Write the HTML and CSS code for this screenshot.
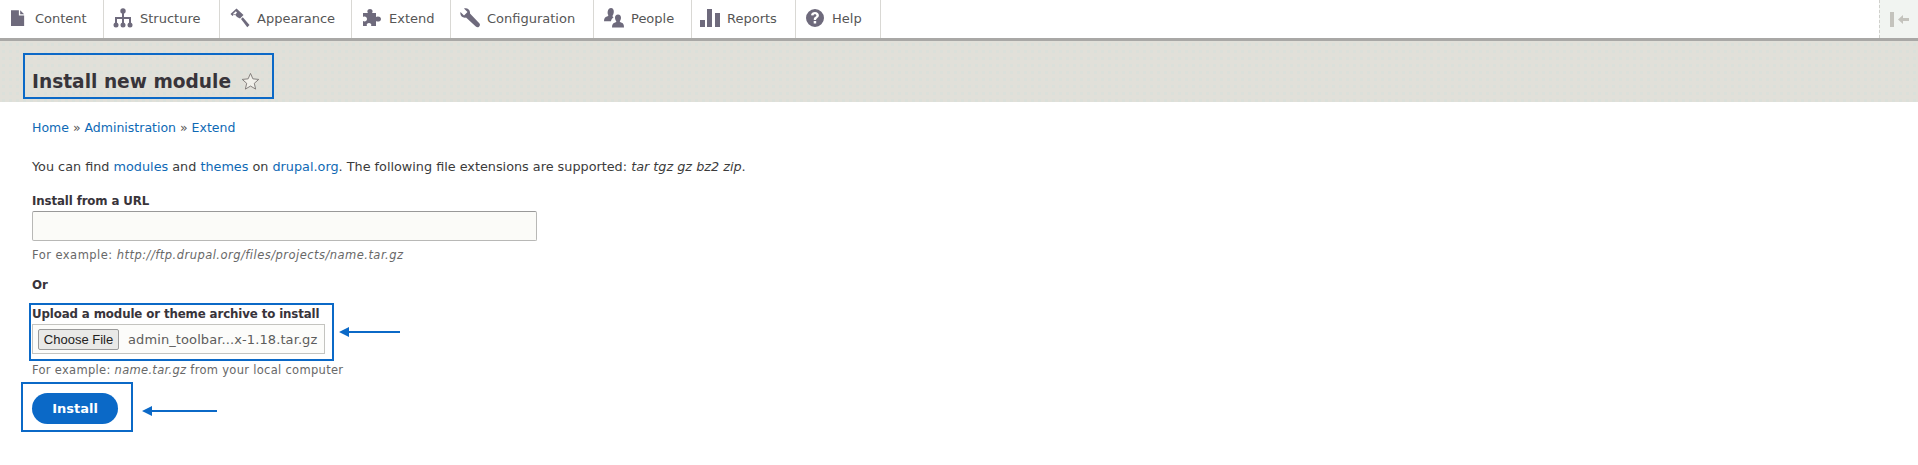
FILE: index.html
```html
<!DOCTYPE html>
<html lang="en">
<head>
<meta charset="UTF-8">
<meta name="viewport" content="width=device-width, initial-scale=1.0">
<title>Install new module</title>
<link rel="stylesheet" href="styles.css">
</head>
<body>

<nav class="toolbar">
    <a class="tool tool-content" href="#">
        <svg class="tool-icon" viewBox="0 0 16 18"><path d="M0 0h9v6h6v12H0zM10.500 0L15 4.800h-4.500z"/></svg>
        Content
    </a>
    <a class="tool tool-structure" href="#">
        <svg class="tool-icon" viewBox="0 0 20 20"><circle cx="10" cy="3" r="2.700"/><circle cx="3" cy="17" r="2.500"/><circle cx="10" cy="17" r="2.500"/><circle cx="17" cy="17" r="2.500"/><path d="M9 4h2v5h7v7h-2v-5h-5v5H9v-5H4v5H2V9h7z"/></svg>
        Structure
    </a>
    <a class="tool tool-appearance" href="#">
        <svg class="tool-icon" viewBox="0 0 20 20"><path fill-rule="evenodd" d="M6.500 .5l7 6.500-3.500 3.500-3-1.500-2.500-3-2 2L.5 6zM3 6l1.800 1.300L7 4.500 5.800 3.200z"/><path d="M11 11l1.800-1.800 6.700 7.800-2.200 2.200z"/></svg>
        Appearance
    </a>
    <a class="tool tool-extend" href="#">
        <svg class="tool-icon" viewBox="0 0 20 20"><path d="M1 5h5c-1-1-1-4 2-4s3 3 2 4h4v4c1-1 5-1 5 2s-4 3-5 2v5H9c1-1 0-3-2-3s-3 2-2 3H1v-5c2 1 4 0 4-2S3 8 1 9z"/></svg>
        Extend
    </a>
    <a class="tool tool-config" href="#">
        <svg class="tool-icon" viewBox="0 0 20 20"><path d="M.5 4L4 7.500l3.500-3.500L4 .5C7-.5 10.500 1.500 10 5.500l9.500 10c.8 1 .5 2.500-.5 3.300-1 .8-2.300.7-3.200-.3L6 9.500C3 10.500-.5 8 .5 4z"/></svg>
        Configuration
    </a>
    <a class="tool tool-people" href="#">
        <svg class="tool-icon" viewBox="0 0 20 20"><path d="M7 0c2 0 3 2 2.800 4-.1 2-1 3-1.300 4 0 .8 1 1.200 1 1.200-1 1-2.500 2-2.500 4H0c0-3 1-4 3-4.700 1-.4 1.500-.8 1.300-1.500C3.500 6 3.500 4.500 3.800 3 4.200 1 5.500 0 7 0z"/><path d="M14 6.500c2 0 3.200 1.600 3 3.500-.1 1.500-.8 2.500-1.200 3.300 0 .7.700 1 2 1.500 1.400.6 2.200 1.500 2.200 4.700H8c0-3 1-4 2.500-4.700 1.300-.5 1.900-.8 1.800-1.500-.5-.8-1.200-1.800-1.300-3.300-.1-2 1.200-3.500 3-3.500z"/></svg>
        People
    </a>
    <a class="tool tool-reports" href="#">
        <svg class="tool-icon" viewBox="0 0 20 18"><rect x="0" y="11" width="5" height="7"/><rect x="7" y="0" width="5" height="18"/><rect x="15" y="4" width="5" height="14"/></svg>
        Reports
    </a>
    <a class="tool tool-help" href="#">
        <svg class="tool-icon" viewBox="0 0 18 18"><path fill-rule="evenodd" d="M9 0a9 9 0 1 1 0 18A9 9 0 0 1 9 0zM9 3C6.800 3 5.300 4.200 5 6.200l2.400.4C7.600 5.700 8.100 5.200 9 5.200c.8 0 1.400.5 1.400 1.200 0 .6-.4 1-1 1.400-1 .7-1.600 1.300-1.600 2.700v.4h2.300v-.3c0-.6.300-.9 1-1.400 1-.7 1.800-1.500 1.800-2.900C12.900 4.300 11.300 3 9 3zM7.700 12v2.400h2.500V12z"/></svg>
        Help
    </a>
    <button class="tray-toggle" type="button" aria-label="Collapse">
        <svg width="19" height="15" viewBox="0 0 19 15"><rect x="0" y="0" width="4" height="15"/><path d="M8 7.500l5-4.500v3h6v3h-6v3z"/></svg>
    </button>
</nav>

<header class="page-head">
    <div class="mark title-mark">
        <h1>Install new module</h1>
        <svg class="star" width="19" height="19" viewBox="0 0 20 20"><path d="M10 1.500l2.500 5.700 6.200.6-4.700 4.100 1.400 6.100-5.400-3.200-5.400 3.200 1.400-6.100-4.700-4.100 6.200-.6z"/></svg>
    </div>
</header>

<main class="page">
    <div class="breadcrumb"><a href="#">Home</a> » <a href="#">Administration</a> » <a href="#">Extend</a></div>

    <p class="intro">You can find <a href="#">modules</a> and <a href="#">themes</a> on <a href="#">drupal.org</a>. The following file extensions are supported: <em>tar tgz gz bz2 zip</em>.</p>

    <form>
        <label class="field-label url-label" for="project_url">Install from a URL</label>
        <input class="url-input" id="project_url" type="text">
        <div class="hint url-hint">For example: <em>http://ftp.drupal.org/files/projects/name.tar.gz</em></div>

        <div class="field-label or-label">Or</div>

        <div class="mark-row upload-row">
            <div class="mark upload-mark">
                <div class="field-label">Upload a module or theme archive to install</div>
                <div class="file-field">
                    <button class="file-button" type="button">Choose File</button>
                    <span class="file-name">admin_toolbar...x-1.18.tar.gz</span>
                </div>
            </div>
            <svg class="arrow" width="61" height="10" viewBox="0 0 61 10"><path d="M0 5l10-5v4h51v2H10v4z"/></svg>
        </div>
        <div class="hint upload-hint">For example: <em>name.tar.gz</em> from your local computer</div>

        <div class="mark-row install-row">
            <div class="mark install-mark">
                <button class="install-button" type="button">Install</button>
            </div>
            <svg class="arrow install-arrow" width="75" height="10" viewBox="0 0 75 10"><path d="M0 5l10-5v4h65v2H10v4z"/></svg>
        </div>
    </form>
</main>

</body>
</html>
```

FILE: styles.css
```css
body {
    margin: 0;
    font-family: "DejaVu Sans", sans-serif;
    font-size: 13px;
    color: #3b3b3b;
    background-color: #fff;
}
a {
    color: #0e69b5;
    text-decoration: none;
}

/* toolbar */
.toolbar {
    display: flex;
    height: 38px;
    background-color: #fff;
    border-bottom: 3px solid #a9a8a6;
}
/* separators run the full toolbar height, the text sits a little higher */
.tool {
    display: flex;
    align-items: center;
    box-sizing: border-box;
    height: 38px;
    padding-bottom: 2px;
    border-right: 1px solid #d9d8d4;
    color: #565656;
    font-size: 13px;
}
.tool-icon {
    flex: none;
    fill: #6e6a7c;
}
.tool-content { width: 104px; padding-left: 11px; gap: 10px; }
.tool-content .tool-icon { width: 14px; height: 18px; }
.tool-structure { width: 116px; padding-left: 9px; gap: 7px; }
.tool-structure .tool-icon { width: 20px; height: 20px; }
.tool-appearance { width: 132px; padding-left: 10px; gap: 7px; }
.tool-appearance .tool-icon { width: 20px; height: 20px; }
.tool-extend { width: 99px; padding-left: 10px; gap: 7px; }
.tool-extend .tool-icon { width: 20px; height: 20px; }
.tool-config { width: 143px; padding-left: 9px; gap: 7px; }
.tool-config .tool-icon { width: 20px; height: 20px; }
.tool-people { width: 98px; padding-left: 10px; gap: 7px; }
.tool-people .tool-icon { width: 20px; height: 20px; }
.tool-reports { width: 104px; padding-left: 8px; gap: 7px; }
.tool-reports .tool-icon { width: 20px; height: 18px; }
.tool-help { width: 85px; padding-left: 10px; gap: 8px; }
.tool-help .tool-icon { width: 18px; height: 18px; }
.tray-toggle {
    display: flex;
    align-items: center;
    justify-content: center;
    width: 39px;
    height: 38px;
    margin-left: auto;
    padding: 0;
    border: none;
    border-left: 1px dashed #d0d0cc;
    background-color: #f1f4f1;
}
.tray-toggle svg {
    fill: #c4c3bd;
}

/* head band */
.page-head {
    box-sizing: border-box;
    height: 61px;
    padding: 12px 0 0 23px;
    background-color: #e1e0d9;
    background-image: radial-gradient(#dbe0da 35%, transparent 40%);
    background-size: 7px 7px;
}
.mark {
    box-sizing: border-box;
    border: 2px solid #0b69c7;
}
.title-mark {
    display: flex;
    align-items: center;
    gap: 10px;
    width: 251px;
    height: 46px;
    padding: 11px 0 0 7px;
}
h1 {
    margin: 0;
    font-size: 18.600px;
    line-height: 24px;
    font-weight: bold;
    color: #38343a;
    white-space: nowrap;
}
.star {
    flex: none;
    fill: #f1f0ea;
    stroke: #7f7a78;
    stroke-width: 1;
}

/* page body */
.page {
    padding: 18px 0 0 32px;
}
.breadcrumb {
    font-size: 12.500px;
    line-height: 16px;
    color: #555;
}
.intro {
    margin: 23px 0 0;
    font-size: 12.800px;
    line-height: 16px;
}
.field-label {
    font-weight: bold;
    font-size: 11.800px;
    line-height: 16px;
    letter-spacing: -.12px;
    color: #38343a;
    white-space: nowrap;
}
.url-label {
    display: block;
    margin: 18px 0 2px;
}
.url-input {
    display: block;
    box-sizing: border-box;
    width: 505px;
    height: 30px;
    border: 1px solid #b8b8b6;
    border-top-color: #999;
    border-radius: 2px;
    background-color: #fbfbf8;
}
.hint {
    font-size: 11.500px;
    line-height: 14px;
    color: #686868;
    letter-spacing: .3px;
}
.url-hint {
    margin-top: 7px;
    letter-spacing: .47px;
}
.or-label {
    margin-top: 15px;
}
.mark-row {
    display: flex;
    align-items: center;
    gap: 5px;
}
.upload-row {
    margin: 10px 0 0 -3px;
}
.upload-mark {
    width: 305px;
    height: 58px;
    padding: 1px 0 0 1px;
}
.file-field {
    box-sizing: border-box;
    display: flex;
    align-items: center;
    gap: 9px;
    width: 293px;
    height: 30px;
    margin-top: 2px;
    padding-left: 5px;
    border: 1px solid #c4c4c0;
    background-color: #fcfcfa;
}
.file-button {
    box-sizing: border-box;
    flex: none;
    width: 81px;
    height: 21px;
    padding: 0;
    border: 1px solid #9a9a9a;
    border-radius: 2px;
    background-color: #e9e9e7;
    font-family: "Liberation Sans", sans-serif;
    font-size: 13px;
    color: #222;
}
.file-name {
    color: #5c5c5c;
    letter-spacing: .1px;
    white-space: nowrap;
}
.upload-hint {
    margin-top: 2px;
}
.install-row {
    margin: 5px 0 0 -11px;
    gap: 9px;
}
.install-mark {
    width: 112px;
    height: 50px;
    padding: 9px 0 0 9px;
}
.install-button {
    display: block;
    width: 86px;
    height: 31px;
    padding: 0;
    border: none;
    border-radius: 16px;
    background-color: #0b69c7;
    color: #fff;
    font-family: "DejaVu Sans", sans-serif;
    font-size: 13px;
    font-weight: bold;
}
.arrow {
    flex: none;
    fill: #0b69c7;
}
.install-arrow {
    margin-top: 8px;
}
```
